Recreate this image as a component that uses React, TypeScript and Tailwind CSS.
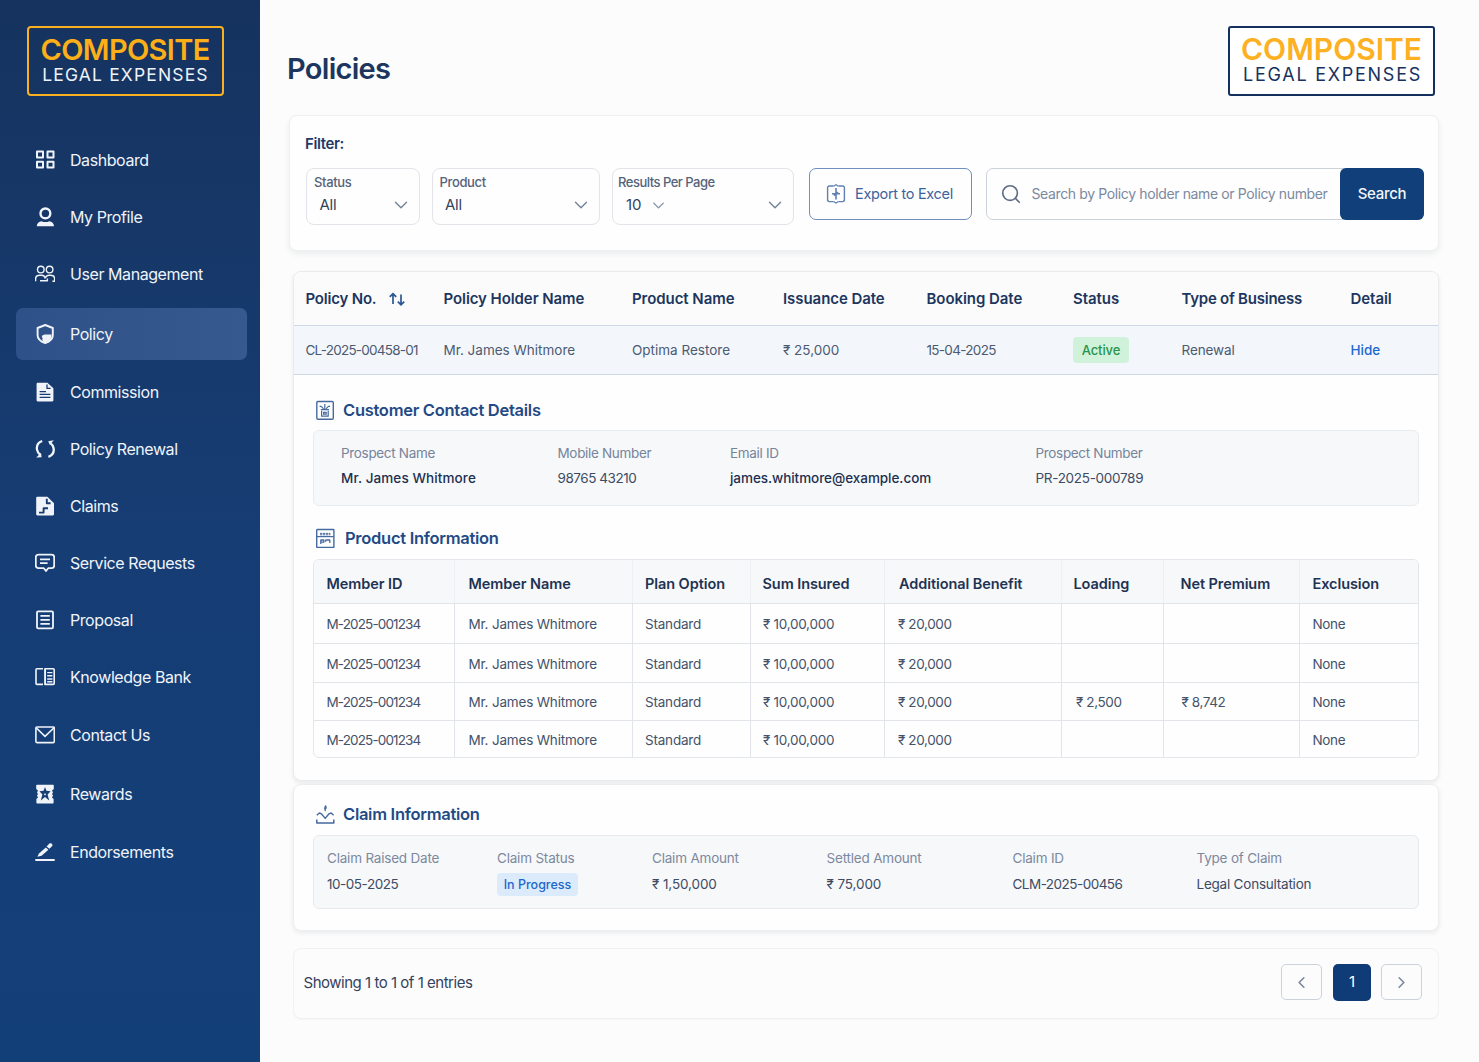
import type { ReactNode } from 'react';
import { ChevronDown, ChevronLeft, ChevronRight, Search } from 'lucide-react';

type IconProps = { className?: string };

function Svg({ className = 'size-5', children }: IconProps & { children: ReactNode }) {
  return (
    <svg viewBox="0 0 20 20" className={className} fill="none" stroke="currentColor" strokeWidth={1.6} strokeLinejoin="round">
      {children}
    </svg>
  );
}

const DashboardIcon = () => (
  <Svg>
    <g strokeWidth={2}>
      <rect x="2" y="1.6" width="6" height="5.8" />
      <rect x="12.5" y="1.6" width="6" height="5.8" />
      <rect x="2" y="11.8" width="6" height="5.8" />
      <rect x="12.5" y="11.8" width="6" height="5.8" />
    </g>
  </Svg>
);

const ProfileIcon = () => (
  <Svg>
    <circle cx="10.4" cy="6.4" r="4.9" strokeWidth={2.4} />
    <path d="M1.8 19.2c0-3 2.2-4.8 4.8-5 2.200 1.200 5.400 1.200 7.600 0 2.600.2 4.800 2 4.800 5z" fill="currentColor" stroke="none" />
  </Svg>
);

const UsersIcon = () => (
  <Svg>
    <g strokeWidth={1.4}>
      <circle cx="5.8" cy="5.6" r="3.3" />
      <circle cx="14.6" cy="5.6" r="3.3" />
      <path d="M.6 17.2v-2.400c0-2.200 1.800-3.600 4.200-3.600h1.600c2 0 3.600 1.200 3.800 3.400M5 16.800h7.400v-2.200M10.400 13.800c.6-1.700 2-2.600 3.800-2.600h1.200c2.400 0 4.200 1.400 4.200 3.600v2.400h-2.200" />
    </g>
  </Svg>
);

const PolicyIcon = () => (
  <Svg>
    <path d="M10.200 1 17.800 4v7.200c0 3.600-3.200 6.400-7.600 7.800-4.400-1.400-7.600-4.200-7.600-7.800V4z" strokeWidth={1.9} />
    <path d="M7 11.600c1 .2 1.200-1.200 3-1.200h6.400c.6 3.600-1.600 6.800-6.200 8.400-2.600-1-3.400-2.600-2.600-4.600-.6-.6-.8-1.600-.6-2.600z" fill="currentColor" stroke="none" />
  </Svg>
);

const CommissionIcon = () => (
  <Svg>
    <path d="M1.600 2C1.600 1.300 2.100.8 2.800.8h9.600l6 5.400v12c0 .7-.5 1.200-1.200 1.200H2.800c-.7 0-1.200-.5-1.200-1.200z" fill="currentColor" stroke="none" />
    <path d="M12 2.600v3.800h3.600M4.600 9.600H11M4.600 12.400h10.800M4.600 15.400h10.800" stroke="#173b72" strokeWidth={1.3} />
  </Svg>
);

const RenewalIcon = () => (
  <Svg>
    <path d="M7.200 2C3.200 3.400 1.400 6.800 2 10.600c.4 2.200 1.600 4 3.400 5.400M13.400 17.800c4-1.400 5.800-4.800 5.200-8.600-.4-2.200-1.600-4-3.400-5.400" strokeWidth={2.300} />
    <path d="M1.200 18.400 6.600 18.200 6 14zM18.800 1.200l-5.600 1 1.600 3.600z" fill="currentColor" stroke="none" />
  </Svg>
);

const ClaimsIcon = () => (
  <Svg>
    <path d="M1.200 2c0-.7.5-1.200 1.200-1.200h10l6.600 6.400v11c0 .7-.5 1.200-1.200 1.200H2.400c-.7 0-1.200-.5-1.200-1.200z" fill="currentColor" stroke="none" />
    <path d="M11.800 2.800v4.400h3.800M4 16.600h4.600v-4.400h4.400" stroke="#173b72" strokeWidth={1.900} />
  </Svg>
);

const RequestsIcon = () => (
  <Svg>
    <path d="M3.400 1.600h13.200c1.500 0 2.600 1.100 2.600 2.600v8.400c0 1.500-1.100 2.600-2.600 2.600h-3.400L11 18l-2.200-2.800H3.400c-1.500 0-2.600-1.100-2.600-2.600V4.200c0-1.500 1.100-2.600 2.600-2.600z" strokeWidth={1.800} />
    <path d="M5 6.400h10M5 10.200h7.600" strokeWidth={1.800} />
  </Svg>
);

const ProposalIcon = () => (
  <Svg>
    <rect x="2" y="1.4" width="16" height="17" rx="1.200" strokeWidth={1.8} />
    <path d="M5.400 5.800h9.400M5.400 9.800h9.400M5.400 13.800h9.400" strokeWidth={1.7} />
  </Svg>
);

const KnowledgeIcon = () => (
  <Svg>
    <path d="M8 17.400H2c-.6 0-1-.4-1-1V2.800c0-.6.4-1 1-1h6M10 1.800h8.200c.6 0 1 .4 1 1v13.600c0 .6-.4 1-1 1H10z" />
    <path d="M10.300 1.600v16M12.200 5.600h5.200M12.200 8.800h5.200M12.200 12h5.200M12.200 14.800h5.200" strokeWidth={1.4} />
  </Svg>
);

const ContactIcon = () => (
  <Svg>
    <rect x=".9" y="2" width="18.4" height="15.6" rx="1" />
    <path d="m1.400 3 8.600 8.400L18.800 3" />
  </Svg>
);

const RewardsIcon = () => (
  <Svg>
    <path
      d="M2.200.8h15.600c.6 0 1 .4 1 1V5L17 6.600l1 2-1 1.400 1 1.600-1 2 1.600 1.400v3.400c0 .6-.4 1-1 1H2.400c-.6 0-1-.4-1-1V15L3 13.600l-1-2L3 10 2 8.600l1-2L1.200 5V1.800c0-.6.4-1 1-1z"
      fill="currentColor"
      stroke="none"
    />
    <path d="m10 3 1.400 3.800 4.200.4-3 3.400 1.600 6L10 13l-4.200 3.600 1.600-6-3-3.400 4.200-.4z" fill="#173f76" stroke="none" />
    <path d="m10 9 1 1.400-1 1.200-1-1.200z" fill="currentColor" stroke="none" />
  </Svg>
);

const EndorsementsIcon = () => (
  <Svg>
    <path d="M1 18h18" strokeWidth={1.9} strokeLinecap="round" />
    <path d="M2.400 14.800 4 11.400l6.800-6L13.400 7.800 6.600 13.800z" fill="currentColor" stroke="none" />
    <path d="m11.600 4.400 2.800-2.800c1.400-1.400 4.200.8 2.600 2.600l-2.600 2.600z" fill="currentColor" stroke="none" />
  </Svg>
);

const navItems = [
  { label: 'Dashboard', icon: DashboardIcon, spacing: 'mt-0' },
  { label: 'My Profile', icon: ProfileIcon, spacing: 'mt-[5px]' },
  { label: 'User Management', icon: UsersIcon, spacing: 'mt-[5px]' },
  { label: 'Policy', icon: PolicyIcon, spacing: 'mt-[9px]', active: true },
  { label: 'Commission', icon: CommissionIcon, spacing: 'mt-[5px]' },
  { label: 'Policy Renewal', icon: RenewalIcon, spacing: 'mt-[5px]' },
  { label: 'Claims', icon: ClaimsIcon, spacing: 'mt-[5px]' },
  { label: 'Service Requests', icon: RequestsIcon, spacing: 'mt-[5px]' },
  { label: 'Proposal', icon: ProposalIcon, spacing: 'mt-[5px]' },
  { label: 'Knowledge Bank', icon: KnowledgeIcon, spacing: 'mt-[5px]' },
  { label: 'Contact Us', icon: ContactIcon, spacing: 'mt-1.5' },
  { label: 'Rewards', icon: RewardsIcon, spacing: 'mt-[7px]' },
  { label: 'Endorsements', icon: EndorsementsIcon, spacing: 'mt-1.5' },
];

function Sidebar() {
  return (
    <aside className="flex h-full w-[260px] shrink-0 flex-col bg-linear-to-b from-[#16335f] via-[#163d74] to-[#133f79]">
      <div className="mt-[26px] ml-[27px] flex h-[70px] w-[197px] flex-col items-center rounded-[4px] border-2 border-[#f9b021] pt-[7px] whitespace-nowrap">
        <span className="mr-px text-[29px] leading-[29px] font-semibold tracking-[-0.65px] text-[#fcaf17]">COMPOSITE</span>
        <span className="mt-px text-[17.5px] leading-[19px] tracking-[1.15px] text-[#eef3fa]">LEGAL EXPENSES</span>
      </div>
      <nav className="mt-[37px] flex flex-col px-4">
        {navItems.map(({ label, icon: Icon, spacing, active }) => (
          <a
            key={label}
            href="#"
            className={`${spacing} flex h-[52px] w-[231px] items-center gap-[15px] rounded-[7px] pl-[19px] text-base tracking-[-0.43px] text-[#f0f4fa] ${
              active ? 'bg-linear-to-r from-[#2f5189] to-[#36598f]' : 'pt-[2px]'
            }`}
          >
            <Icon />
            <span className="whitespace-nowrap">{label}</span>
          </a>
        ))}
      </nav>
    </aside>
  );
}

function SelectBox({ label, value, width, inline }: { label: string; value: string; width: string; inline?: boolean }) {
  return (
    <div className={`${width} flex h-[57px] flex-col rounded-lg border border-[#e2e4e9] pt-[5px] pr-[7px]`}>
      <span className={`${inline ? 'pl-[5px] tracking-[-0.5px]' : 'pl-[7px] tracking-[-0.35px]'} text-[13px] leading-4 font-medium text-[#55637a]`}>{label}</span>
      <div className={`mt-1.5 flex items-center text-[15px] leading-[18px] text-[#34435c] ${inline ? 'pl-[13px]' : 'pl-[12.5px] tracking-[-0.3px]'}`}>
        {value}
        {inline && <ChevronDown className="my-[-2px] ml-[7px] size-[19px] text-[#8390a5]" strokeWidth={1.75} />}
        <ChevronDown className="my-[-2px] ml-auto size-[22px] text-[#77859b]" strokeWidth={1.6} />
      </div>
    </div>
  );
}

function FilterCard() {
  return (
    <section className="ml-[29px] h-[136px] w-[1150px] rounded-lg border border-[#eef0f2] bg-[#fefefe] pl-[15px] shadow-[0_3px_6px_rgba(15,23,42,0.07)]">
      <h2 className="mt-[18px] text-[15px] leading-5 font-semibold tracking-[-0.4px] text-[#1e3a66]">Filter:</h2>
      <div className="mt-3.5 ml-px flex items-start">
        <SelectBox label="Status" value="All" width="w-[114px]" />
        <SelectBox label="Product" value="All" width="ml-[11.5px] w-[168.5px]" />
        <SelectBox label="Results Per Page" value="10" width="ml-3 w-[182px]" inline />
        <button className="ml-[15px] flex h-[52px] w-[163px] items-center rounded-[7px] border-[1.5px] border-[#6f8fbe] pl-4 text-[14.5px] tracking-[-0.32px] whitespace-nowrap text-[#3d639c]">
          <svg viewBox="0 0 20 20" className="mr-[9px] size-5 shrink-0 text-[#5f80b1]" fill="none" stroke="currentColor" strokeWidth={1.4}>
            <path d="M7.600 2H3L1.600 3v13.600l1.400 1h4.600M12.400 2H17l1.400 1v13.600l-1.400 1h-4.600" />
            <path d="M7.600 2.200 10 .8l2.400 1.400M7.600 17.400l2.400 1.600 2.400-1.600" strokeWidth={1.2} />
            <path d="M10 4v11.400M6 9.800h8M8 11.600l4-3.600" strokeWidth={1.6} />
          </svg>
          Export to Excel
        </button>
        <div className="ml-3.5 flex h-[52px] w-[438px] rounded-[7px] border border-[#ccd2dc]">
          <div className="flex flex-1 items-center pl-[13px] text-[14px] tracking-[-0.37px] whitespace-nowrap text-[#7b899e]">
            <Search className="mr-[9.5px] size-[22px] shrink-0 text-[#5f6e85]" strokeWidth={1.8} />
            <span className="pb-px">Search by Policy holder name or Policy number</span>
          </div>
          <button className="-my-px -mr-px h-[52px] w-[84px] shrink-0 rounded-md bg-[#113f79] text-[15px] font-medium tracking-[-0.3px] text-[#f2f6fb]">
            Search
          </button>
        </div>
      </div>
    </section>
  );
}

const policyGrid = 'grid grid-cols-[138px_188.5px_151px_143.5px_146.5px_108.5px_169px_1fr] items-center pl-[11.5px] whitespace-nowrap';

function SectionTitle({ icon, title, gap = 'gap-2.5' }: { icon: ReactNode; title: string; gap?: string }) {
  return (
    <h3 className={`flex h-5 items-center ${gap} text-[16.5px] leading-5 font-semibold tracking-[-0.28px] text-[#234a85]`}>
      {icon}
      <span>{title}</span>
    </h3>
  );
}

const contactIcon = (
  <Svg className="size-5 text-[#456a9f]">
    <rect x="1.8" y="1.5" width="16.5" height="17.8" rx="1.200" strokeWidth={1.4} />
    <g strokeWidth={1.2}>
      <path d="M9.800 4v5.400M4.600 6.400h1.600l2.400 2.400M15 6.400h-1.600L11 8.800M5.800 9.600h8.200M6.600 10.800v5.400h6.600v-5.400M8.600 12.400h2.600v1.800H8.600z" />
    </g>
  </Svg>
);

const productIcon = (
  <Svg className="size-5 text-[#456a9f]">
    <rect x="1.7" y="1.5" width="17.2" height="18" rx=".6" strokeWidth={1.4} />
    <path d="M1.700 8.600h17.200" strokeWidth={1.2} />
    <path d="M5 5.400h10.400M5 6.800h10.400" strokeWidth={1} strokeDasharray="2.4 .6" />
    <path d="M5.800 16v-4h3v2.200h-3M10.600 13.800v-1.600h4.200v2.800M11 12h4" strokeWidth={1.3} />
  </Svg>
);

const claimIcon = (
  <Svg className="size-5 text-[#456a9f]">
    <path d="M1.800 15.400v3.600h17v-3.600" strokeWidth={1.5} />
    <path d="M1.800 11.200 4.400 9l2 .8 3.800 4.600L14 9.800 16.200 9l2.400 2.200" strokeWidth={1.4} />
    <path d="M10.200 7.200V5.600c-1.200-1.200-.6-2.200.4-3.800.8 1.600.8 2.800-.4 3.800" strokeWidth={1.2} />
  </Svg>
);

const contactDetails = [
  { label: 'Prospect Name', value: 'Mr. James Whitmore', style: 'font-medium tracking-[0.1px] text-[#1d3050]' },
  { label: 'Mobile Number', value: '98765 43210', style: 'tracking-[-0.45px] text-[#3d4b63]' },
  { label: 'Email ID', value: 'james.whitmore@example.com', style: 'font-medium tracking-[-0.05px] text-[#1d3050]' },
  { label: 'Prospect Number', value: 'PR-2025-000789', style: 'tracking-[-0.3px] text-[#3d4b63]' },
];

const memberColumns = [
  { label: 'Member ID', pad: 'pl-[12.5px]' },
  { label: 'Member Name', pad: 'pl-[13.5px]' },
  { label: 'Plan Option', pad: 'pl-3' },
  { label: 'Sum Insured', pad: 'pl-[11.5px]' },
  { label: 'Additional Benefit', pad: 'pl-3.5' },
  { label: 'Loading', pad: 'pl-[11.5px]' },
  { label: 'Net Premium', pad: 'pl-[16.5px]' },
  { label: 'Exclusion', pad: 'pl-[12.5px]' },
];

const cellStyles = [
  'pl-[12.5px] tracking-[-0.87px]',
  'pl-[13.5px] tracking-[-0.18px]',
  'pl-3 tracking-[-0.2px]',
  'pl-3 tracking-[-0.27px]',
  'pl-[13px] tracking-[-0.38px]',
  'pl-3.5 tracking-[-0.38px]',
  'pl-[17.5px] tracking-[-0.4px]',
  'pl-[12.5px] tracking-[-0.35px]',
];

const members = [
  { loading: '', premium: '', height: 'h-[39px]', pad: 'pt-[2px]' },
  { loading: '', premium: '', height: 'h-[38px]', pad: 'pt-[2px]' },
  { loading: '₹ 2,500', premium: '₹ 8,742', height: 'h-[37px]', pad: 'pt-px' },
  { loading: '', premium: '', height: 'h-9', pad: 'pt-[3px]' },
];

const memberGrid = 'grid grid-cols-[141px_178px_118px_134px_177px_102px_136px_1fr] whitespace-nowrap';

function MemberTable() {
  return (
    <div className="mt-[11px] ml-[19px] h-[199px] w-[1106px] overflow-hidden rounded-md border border-[#e3e6eb]">
      <div className={`${memberGrid} h-[43px] bg-[#f7f8fa] text-[14.5px] font-semibold tracking-[-0.08px] text-[#1f3354]`}>
        {memberColumns.map(({ label, pad }) => (
          <div key={label} className={`${pad} flex items-center border-r border-[#eef0f3] pt-1 last:border-r-0`}>
            {label}
          </div>
        ))}
      </div>
      {members.map((member, row) => (
        <div key={row} className={`${memberGrid} ${member.height} box-content border-t border-[#e1e4e9] text-[13.5px] text-[#44526a]`}>
          {['M-2025-001234', 'Mr. James Whitmore', 'Standard', '₹ 10,00,000', '₹ 20,000', member.loading, member.premium, 'None'].map(
            (cell, i) => (
              <div key={i} className={`${cellStyles[i]} ${member.pad} flex items-center border-r border-[#e1e4e9] last:border-r-0`}>
                {cell}
              </div>
            ),
          )}
        </div>
      ))}
    </div>
  );
}

function PolicyCard() {
  return (
    <section className="mt-5 ml-[33px] h-[510px] w-[1146px] overflow-hidden rounded-lg border border-[#e9ebee] bg-[#fefefe] shadow-[0_2px_4px_rgba(15,23,42,0.08)]">
      <div className={`${policyGrid} h-[53px] bg-[#fbfbfb] pt-px text-[15px] font-semibold tracking-[-0.06px] text-[#1c3660]`}>
        <span className="flex items-center tracking-[-0.2px]">
          Policy No.
          <svg viewBox="0 0 16 14" className="ml-[12.5px] h-3.5 w-4 text-[#2a5793]" fill="none" stroke="currentColor" strokeWidth={1.7}>
            <path d="M4 12V2M.8 4.800 4 1.600l3.200 3.200M12 2.600v10M8.800 9.600l3.200 3.200 3.200-3.200" />
          </svg>
        </span>
        <span className="tracking-[-0.08px]">Policy Holder Name</span>
        <span>Product Name</span>
        <span>Issuance Date</span>
        <span>Booking Date</span>
        <span>Status</span>
        <span className="tracking-[-0.24px]">Type of Business</span>
        <span>Detail</span>
      </div>
      <div className={`${policyGrid} h-[50px] border-y border-[#cdd9e7] bg-[#f3f7fb] text-[13.5px] text-[#4c5a72]`}>
        <span className="tracking-[-0.77px]">CL-2025-00458-01</span>
        <span>Mr. James Whitmore</span>
        <span>Optima Restore</span>
        <span>₹ 25,000</span>
        <span className="tracking-[-0.68px]">15-04-2025</span>
        <span className="flex h-[26px] w-14 items-center justify-center rounded-[4px] bg-[#d0f2da] pt-px text-[13px] font-medium tracking-[-0.1px] text-[#27944e]">
          Active
        </span>
        <span className="tracking-[-0.1px]">Renewal</span>
        <a href="#" className="font-medium text-[#1b68cf]">
          Hide
        </a>
      </div>

      <div className="mt-[25px] ml-[21px]">
        <SectionTitle icon={contactIcon} title="Customer Contact Details" gap="gap-2" />
      </div>
      <dl className="mt-2.5 ml-[19px] grid h-[76px] w-[1106px] grid-cols-[216.5px_172.5px_305.5px_1fr] rounded-md border border-[#e8ebef] bg-[#f7f8fa] pt-3 pl-[27px]">
        {contactDetails.map(({ label, value, style }) => (
          <div key={label}>
            <dt className="text-[13.5px] leading-5 tracking-[-0.33px] text-[#76849a]">{label}</dt>
            <dd className={`mt-[5px] text-[13.5px] leading-5 ${style}`}>{value}</dd>
          </div>
        ))}
      </dl>

      <div className="mt-[22px] ml-[21px]">
        <SectionTitle icon={productIcon} title="Product Information" />
      </div>
      <MemberTable />
    </section>
  );
}

const claimDetails = [
  { label: 'Claim Raised Date', value: '10-05-2025', style: 'tracking-[-0.47px]' },
  { label: 'Claim Status', value: 'In Progress', badge: true },
  { label: 'Claim Amount', value: '₹ 1,50,000', style: 'tracking-[-0.1px]' },
  { label: 'Settled Amount', value: '₹ 75,000', style: 'tracking-[-0.1px]' },
  { label: 'Claim ID', value: 'CLM-2025-00456', style: 'tracking-[-0.52px]' },
  { label: 'Type of Claim', value: 'Legal Consultation', style: 'tracking-[-0.22px]' },
];

function ClaimCard() {
  return (
    <section className="mt-[3px] ml-[33px] h-[147px] w-[1146px] rounded-lg border border-[#eceef1] bg-[#fefefe] shadow-[0_2px_5px_rgba(15,23,42,0.08)]">
      <div className="mt-[19px] ml-[21px]">
        <SectionTitle icon={claimIcon} title="Claim Information" gap="gap-2" />
      </div>
      <dl className="mt-[11px] ml-[19px] grid h-[74px] w-[1106px] grid-cols-[170px_155px_174.5px_186px_184px_1fr] rounded-md border border-[#e6e9ed] bg-[#f7f8fa] pt-3 pl-[13px]">
        {claimDetails.map(({ label, value, badge, style }) => (
          <div key={label}>
            <dt className="text-[13.5px] leading-5 tracking-[-0.2px] text-[#7c899e]">{label}</dt>
            {badge ? (
              <dd className="mt-[5px] flex h-[23px] w-[81px] items-center justify-center rounded-[4px] bg-[#dcebfb] pt-px text-[12.5px] font-medium text-[#1c68cd]">
                {value}
              </dd>
            ) : (
              <dd className={`mt-1.5 text-[13.5px] leading-5 text-[#3d4b63] ${style}`}>{value}</dd>
            )}
          </div>
        ))}
      </dl>
    </section>
  );
}

function Pagination() {
  return (
    <footer className="mt-[17px] ml-[33px] flex h-[71px] w-[1146px] items-center rounded-lg border border-[#eff1f3] bg-[#fcfcfc] pr-4 pl-[9.5px] text-[15px] text-[#34435c] shadow-[0_1px_1px_rgba(15,23,42,0.03)]">
      <span className="tracking-[-0.48px]">Showing 1 to 1 of 1 entries</span>
      <div className="-mt-[3px] ml-auto flex items-center">
        <button className="flex h-9 w-[41px] items-center justify-center rounded-[5px] border border-[#ccd2db] text-[#77859a]">
          <ChevronLeft className="size-[19px]" strokeWidth={1.9} />
        </button>
        <button className="ml-[11px] h-[37px] w-[38px] rounded-[5px] bg-[#0f3b76] pt-px text-[15px] text-white">1</button>
        <button className="ml-2.5 flex h-9 w-[41px] items-center justify-center rounded-[5px] border border-[#ccd2db] text-[#77859a]">
          <ChevronRight className="size-[19px]" strokeWidth={1.9} />
        </button>
      </div>
    </footer>
  );
}

export default function App() {
  return (
    <div className="flex h-[1062px] w-[1479px] overflow-hidden bg-[#fcfcfc] font-['Inter',sans-serif]">
      <Sidebar />
      <main className="flex-1">
        <header className="flex h-[115px] justify-between pr-[44px] pl-[27px]">
          <h1 className="mt-[51px] text-[29px] leading-9 font-semibold tracking-[-0.7px] text-[#1c3660]">Policies</h1>
          <div className="mt-[26px] flex h-[70px] w-[207px] flex-col items-center rounded-[3px] border-2 border-[#14305f] bg-white pt-[5.5px] whitespace-nowrap">
            <span className="text-[30px] leading-[30px] font-semibold text-[#fdb022]">COMPOSITE</span>
            <span className="mt-px ml-[2px] text-[18px] leading-[19px] tracking-[1.75px] text-[#173260]">LEGAL EXPENSES</span>
          </div>
        </header>
        <FilterCard />
        <PolicyCard />
        <ClaimCard />
        <Pagination />
      </main>
    </div>
  );
}
